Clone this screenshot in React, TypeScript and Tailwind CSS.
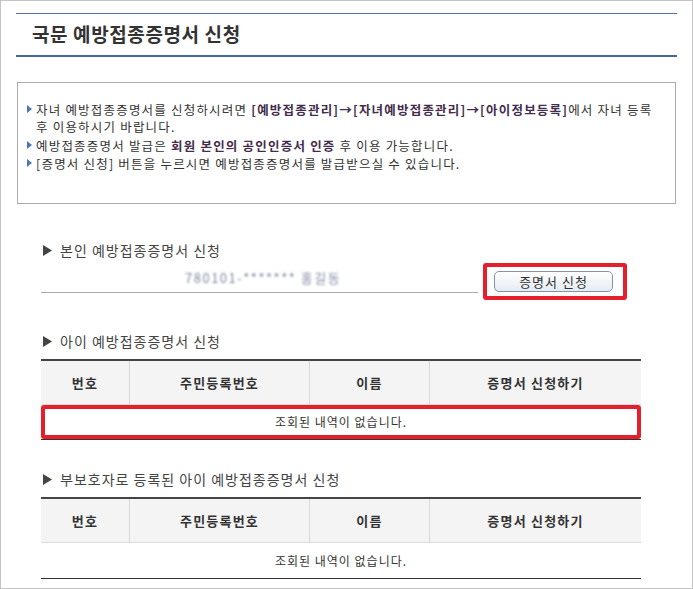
import React from 'react';

const FONT = '"Noto Sans CJK KR", "Noto Sans", sans-serif';

const Bullet: React.FC = () => (
  <svg width="5" height="8" viewBox="0 0 5 8" className="shrink-0 mt-[4px] mr-[4px]">
    <polygon points="0,0 5,4 0,8" fill="#4d76b8" />
  </svg>
);

const SectionTitle: React.FC<{ children: React.ReactNode; className?: string }> = ({ children, className }) => (
  <div className={`flex items-center h-[20px] ${className ?? ''}`}>
    <svg width="9" height="11" viewBox="0 0 9 11" className="ml-[2px] mr-[8px]">
      <polygon points="0,0 9,5.5 0,11" fill="#444" />
    </svg>
    <span className="text-[14px] text-[#444] leading-[20px] tracking-[1px]">{children}</span>
  </div>
);

const headers = ['번호', '주민등록번호', '이름', '증명서 신청하기'];

const Table: React.FC<{ highlight?: boolean; className?: string }> = ({ highlight, className }) => (
  <div className={`w-[600px] border-t-2 border-[#444] border-b border-b-[#333] ${className ?? ''}`}>
    {/* header */}
    <div className="grid grid-cols-[89px_180px_120px_211px] h-[44px] bg-[#f4f4f4] border-b border-[#dcdcdc]">
      {headers.map((h, i) => (
        <div
          key={h}
          className={`flex items-center justify-center text-[13px] font-bold text-[#333] tracking-[1.2px] ${
            i < headers.length - 1 ? 'border-r border-[#d8d8d8]' : ''
          }`}
        >
          {h}
        </div>
      ))}
    </div>
    {/* body */}
    {highlight ? (
      <div className="h-[34px] border-4 border-[#e3202b] rounded-[3px] flex items-center justify-center text-[12px] text-[#333] tracking-[1px]">
        조회된 내역이 없습니다.
      </div>
    ) : (
      <div className="h-[35px] flex items-center justify-center text-[12px] text-[#333] tracking-[1px]">
        조회된 내역이 없습니다.
      </div>
    )}
  </div>
);

export default function App() {
  return (
    <div
      className="w-[693px] h-[589px] border border-[#c4c4c4] bg-white overflow-hidden"
      style={{ fontFamily: FONT }}
    >
      {/* Page title */}
      <div className="mx-[15px] mt-[12px] h-[44px] border-t border-[#5470a8] border-b-2 border-b-[#4866a3] flex items-center pl-[16px]">
        <h1 className="text-[19px] font-bold text-[#333] tracking-[0.6px]">국문 예방접종증명서 신청</h1>
      </div>

      {/* Notice box */}
      <div className="mx-[16px] mt-[25px] h-[122px] border border-[#ababab] pt-[18px] pl-[9px] pr-[4px] text-[12.5px] text-[#333] leading-[17px] tracking-[1.2px] whitespace-nowrap">
        <div className="flex">
          <Bullet />
          <p>
            자녀 예방접종증명서를 신청하시려면{' '}
            <b className="text-[#442c4c]">[예방접종관리]→[자녀예방접종관리]→[아이정보등록]</b>에서 자녀 등록
            <br />후 이용하시기 바랍니다.
          </p>
        </div>
        <div className="flex mt-[2px]">
          <Bullet />
          <p>
            예방접종증명서 발급은 <b className="text-[#442c4c]">회원 본인의 공인인증서 인증</b> 후 이용 가능합니다.
          </p>
        </div>
        <div className="flex mt-[1px]">
          <Bullet />
          <p>[증명서 신청] 버튼을 누르시면 예방접종증명서를 발급받으실 수 있습니다.</p>
        </div>
      </div>

      <div className="pl-[40px]">
        {/* 본인 */}
        <SectionTitle className="mt-[36px]">본인 예방접종증명서 신청</SectionTitle>
        <div className="flex items-start mt-[3px]">
          <div className="w-[437px] h-[30px] border-b border-[#a9a9a9] flex items-center pl-[144px]">
            <span className="text-[13px] text-[#7d88a0] blur-[1.2px] tracking-[1.5px]">780101-******* 홍길동</span>
          </div>
          <div className="ml-[5px] w-[144px] h-[37px] border-4 border-[#e3202b] rounded-[3px] flex items-center pl-[7px]">
            <button className="w-[119px] h-[21px] rounded-[5px] border border-[#8393ab] bg-gradient-to-b from-white to-[#e6ebf2] text-[13px] text-[#333] leading-none tracking-[1px]">
              증명서 신청
            </button>
          </div>
        </div>

        {/* 아이 */}
        <SectionTitle className="mt-[31px]">아이 예방접종증명서 신청</SectionTitle>
        <Table highlight className="mt-[8px]" />

        {/* 부보호자 */}
        <SectionTitle className="mt-[29px]">부보호자로 등록된 아이 예방접종증명서 신청</SectionTitle>
        <Table className="mt-[8px]" />
      </div>
    </div>
  );
}
